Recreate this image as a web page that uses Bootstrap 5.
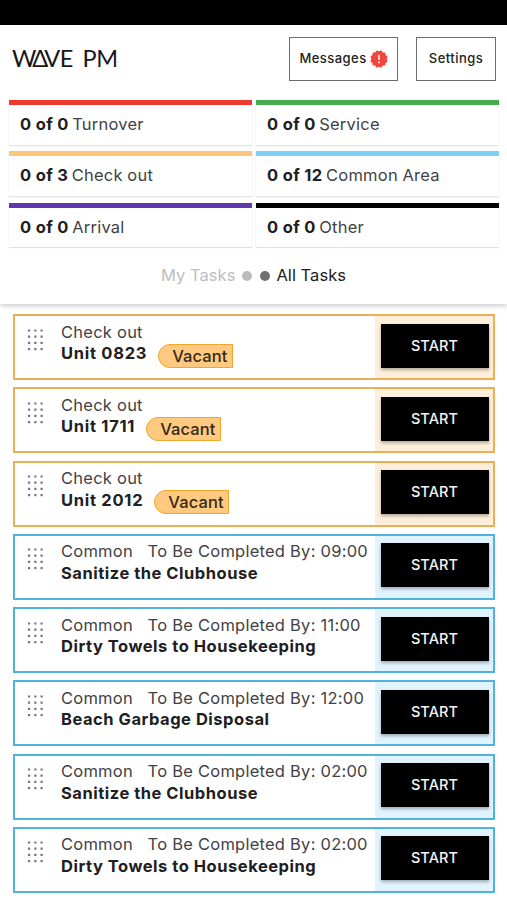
<!DOCTYPE html>
<html lang="en">
<head>
<meta charset="utf-8">
<meta name="viewport" content="width=device-width, initial-scale=1">
<title>Wave PM</title>
<link href="https://cdn.jsdelivr.net/npm/bootstrap@5.3.0/dist/css/bootstrap.min.css" rel="stylesheet">
<style>
  body { font-family: Inter, "Liberation Sans", sans-serif; color: #424244; font-size: 16.5px; line-height: 22px; letter-spacing: .24px; height: 900px; overflow: hidden; background: #fff; }
  b, .fw-bold { color: #202022; font-weight: 650 !important; }
  .status-strip { height: 25px; }
  .top-panel { height: 279px; box-shadow: 0 2px 5px rgba(0,0,0,.2); }
  .brand-row { height: 75px; padding: 12px 11px 0 12px; }
  .wordmark { font-family: Lato, sans-serif; font-size: 23.5px; line-height: 43px; color: #17171a; letter-spacing: -.4px; word-spacing: 4px; }
  .wordmark .tight { letter-spacing: -4px; }
  .btn-outline { height: 44px; border: 1px solid #6b6b6b; border-radius: 0; padding: 0; font-size: 13px; font-weight: 550; letter-spacing: .45px; color: #222; }
  .btn-messages { width: 109px; margin-right: 18px; }
  .btn-settings { width: 80px; }
  .tile-grid { display: grid; grid-template-columns: 243px 243px; column-gap: 4px; row-gap: 6.6px; padding: 0 9px; }
  .tile { height: 44.7px; border-top: 5px solid var(--tone); padding: 8px 11px 0; box-shadow: 0 1px 1px 0 #e2e2e6, 0 0 1px 0 #ededf0; white-space: nowrap; word-spacing: -.3px; }
  .tile b { letter-spacing: .45px; margin-right: -1.3px; }
  .red { --tone: #ed3b30; } .green { --tone: #46ad4f; } .peach { --tone: #fbc77c; }
  .sky { --tone: #7fd0f7; } .violet { --tone: #6038ae; } .ink { --tone: #000; }
  .switch-row { padding-top: 16.4px; letter-spacing: .05px; }
  .switch-row .mine { color: #bdbdbd; }
  .switch-row .every { color: #202022; }
  .dot { width: 10px; height: 10px; margin: 2px 0 0; }
  .dot-mine { margin-left: 6.5px; margin-right: 8px; }
  .dot-every { margin-right: 6.5px; }
  .task-list { padding: 10px 12px 0 13px; gap: 7.25px; }
  .task { height: 66px; border: 2px solid var(--edge); --edge: #ecaf55; --wash: #feefdb; }
  .task.common { --edge: #4fb3de; --wash: #e0f3fe; }
  .grip { width: 46px; padding: 12.5px 0 0 12.5px; }
  .task-text { padding-top: 5.7px; white-space: nowrap; }
  .task-text > div { line-height: 21.5px; }
  .task-text .fw-bold { letter-spacing: .52px; }
  .task-text .unit { margin-right: 10.5px; letter-spacing: .72px; }
  .vacant { height: 24px; margin-top: .5px; border: 1.5px solid #f5a42c; background: #ffca80; border-radius: 12px 0 0 12px; padding: 0 4.5px 0 13.5px; color: #352915; font-size: 16.5px; font-weight: 500; line-height: 22px; letter-spacing: .1px; }
  .action { width: 118px; background: var(--wash); padding: 7.5px 4px 0 5.5px; }
  .btn-start { width: 108px; height: 44px; background: #000; color: #f3f3f3; border: 0; border-radius: 0; box-shadow: 0 2px 3px rgba(0,0,0,.3); font-size: 14.5px; font-weight: 550; letter-spacing: .1px; padding: 0; display: block; }
</style>
</head>
<body>
<div class="status-strip bg-black"></div>
<header class="top-panel bg-white">
  <div class="brand-row d-flex align-items-start">
    <div class="wordmark me-auto"><span class="tight">WΔ</span>VE PM</div>
    <button class="btn btn-outline btn-messages d-flex align-items-center justify-content-center">Messages
      <svg width="18" height="18" style="margin-left:3px" viewBox="-9 -9 18 18" aria-hidden="true"><g fill="#f2463d"><rect x="-6.5" y="-6.5" width="13" height="13" rx="1"/><rect x="-6.5" y="-6.5" width="13" height="13" rx="1" transform="rotate(30)"/><rect x="-6.5" y="-6.5" width="13" height="13" rx="1" transform="rotate(60)"/></g><path d="M0-4.3V.8M0 2.5v1.8" stroke="#fff" stroke-width="1.6"/></svg>
    </button>
    <button class="btn btn-outline btn-settings">Settings</button>
  </div>
  <div class="tile-grid">
    <div class="tile red"><b>0 of 0</b> Turnover</div>
    <div class="tile green"><b>0 of 0</b> Service</div>
    <div class="tile peach"><b>0 of 3</b> Check out</div>
    <div class="tile sky"><b>0 of 12</b> Common Area</div>
    <div class="tile violet"><b>0 of 0</b> Arrival</div>
    <div class="tile ink"><b>0 of 0</b> Other</div>
  </div>
  <div class="switch-row d-flex justify-content-center align-items-center">
    <span class="mine">My Tasks</span>
    <svg class="dot dot-mine" viewBox="0 0 10 10"><circle cx="5" cy="5" r="5" fill="#bcbcbc"/></svg>
    <svg class="dot dot-every" viewBox="0 0 10 10"><circle cx="5" cy="5" r="5" fill="#707070"/></svg>
    <span class="every">All Tasks</span>
  </div>
</header>
<svg class="d-none"><defs><g id="grip-dots" fill="none" stroke="#77777b" stroke-width="2.2" stroke-dasharray="2.2 4.05"><path d="M0 1.5h15M0 7.7h15M0 13.9h15M0 20.1h15"/></g></defs></svg>
<main class="task-list d-flex flex-column">
  <div class="task d-flex"><div class="grip"><svg class="d-block" width="17" height="22"><use href="#grip-dots"/></svg></div><div class="task-text flex-grow-1"><div>Check out</div><div class="d-flex"><span class="unit fw-bold">Unit 0823</span><span class="vacant">Vacant</span></div></div><div class="action"><button class="btn btn-start">START</button></div></div>
  <div class="task d-flex"><div class="grip"><svg class="d-block" width="17" height="22"><use href="#grip-dots"/></svg></div><div class="task-text flex-grow-1"><div>Check out</div><div class="d-flex"><span class="unit fw-bold">Unit 1711</span><span class="vacant">Vacant</span></div></div><div class="action"><button class="btn btn-start">START</button></div></div>
  <div class="task d-flex"><div class="grip"><svg class="d-block" width="17" height="22"><use href="#grip-dots"/></svg></div><div class="task-text flex-grow-1"><div>Check out</div><div class="d-flex"><span class="unit fw-bold">Unit 2012</span><span class="vacant">Vacant</span></div></div><div class="action"><button class="btn btn-start">START</button></div></div>
  <div class="task common d-flex"><div class="grip"><svg class="d-block" width="17" height="22"><use href="#grip-dots"/></svg></div><div class="task-text flex-grow-1"><div>Common &nbsp; To Be Completed By: 09:00</div><div class="fw-bold">Sanitize the Clubhouse</div></div><div class="action"><button class="btn btn-start">START</button></div></div>
  <div class="task common d-flex"><div class="grip"><svg class="d-block" width="17" height="22"><use href="#grip-dots"/></svg></div><div class="task-text flex-grow-1"><div>Common &nbsp; To Be Completed By: 11:00</div><div class="fw-bold">Dirty Towels to Housekeeping</div></div><div class="action"><button class="btn btn-start">START</button></div></div>
  <div class="task common d-flex"><div class="grip"><svg class="d-block" width="17" height="22"><use href="#grip-dots"/></svg></div><div class="task-text flex-grow-1"><div>Common &nbsp; To Be Completed By: 12:00</div><div class="fw-bold">Beach Garbage Disposal</div></div><div class="action"><button class="btn btn-start">START</button></div></div>
  <div class="task common d-flex"><div class="grip"><svg class="d-block" width="17" height="22"><use href="#grip-dots"/></svg></div><div class="task-text flex-grow-1"><div>Common &nbsp; To Be Completed By: 02:00</div><div class="fw-bold">Sanitize the Clubhouse</div></div><div class="action"><button class="btn btn-start">START</button></div></div>
  <div class="task common d-flex"><div class="grip"><svg class="d-block" width="17" height="22"><use href="#grip-dots"/></svg></div><div class="task-text flex-grow-1"><div>Common &nbsp; To Be Completed By: 02:00</div><div class="fw-bold">Dirty Towels to Housekeeping</div></div><div class="action"><button class="btn btn-start">START</button></div></div>
</main>
<script src="https://cdn.jsdelivr.net/npm/bootstrap@5.3.0/dist/js/bootstrap.bundle.min.js"></script>
</body>
</html>
